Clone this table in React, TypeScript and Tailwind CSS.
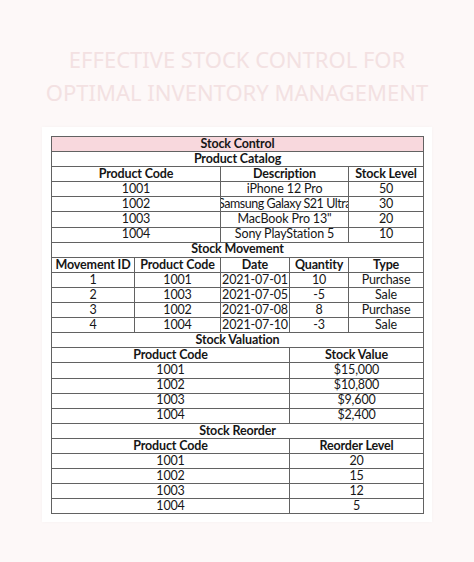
const catalog = [
  ["1001", "iPhone 12 Pro", "50"],
  ["1002", "Samsung Galaxy S21 Ultra", "30"],
  ["1003", 'MacBook Pro 13"', "20"],
  ["1004", "Sony PlayStation 5", "10"],
];

const movements = [
  ["1", "1001", "2021-07-01", "10", "Purchase"],
  ["2", "1003", "2021-07-05", "-5", "Sale"],
  ["3", "1002", "2021-07-08", "8", "Purchase"],
  ["4", "1004", "2021-07-10", "-3", "Sale"],
];

const valuation = [
  ["1001", "$15,000"],
  ["1002", "$10,800"],
  ["1003", "$9,600"],
  ["1004", "$2,400"],
];

const reorder = [
  ["1001", "20"],
  ["1002", "15"],
  ["1003", "12"],
  ["1004", "5"],
];

const cell = "h-[15.1px] border border-[#626262] p-0 text-center leading-none whitespace-nowrap overflow-hidden";

function Td({ children, span = 1, bold = false }: { children: React.ReactNode; span?: number; bold?: boolean }) {
  return (
    <td colSpan={span} className={`${cell} ${bold ? "font-bold" : ""}`}>
      <div className="flex h-[14px] items-center justify-center overflow-hidden">{children}</div>
    </td>
  );
}

function Section({ title }: { title: string }) {
  return (
    <tr>
      <Td span={5} bold>
        {title}
      </Td>
    </tr>
  );
}

export default function App() {
  return (
    <div className="h-[562px] w-[474px] bg-[#fdf8f8] pt-[43px]">
      <h1 className="text-center font-['Noto_Sans',sans-serif] text-[22px] font-normal leading-[33px] text-[#f3e1e2]">
        EFFECTIVE STOCK CONTROL FOR
        <br />
        OPTIMAL INVENTORY MANAGEMENT
      </h1>
      <div className="mx-auto mt-[18px] w-[390px] bg-white px-[9px] pb-[8px] pt-[9px] shadow-[0_0_4px_rgba(0,0,0,0.03)]">
        <table className="w-[372px] table-fixed border-collapse font-['Lato',sans-serif] text-[12.5px] tracking-[-0.15px] text-[#161616]">
          <colgroup>
            <col className="w-[83px]" />
            <col className="w-[86px]" />
            <col className="w-[69px]" />
            <col className="w-[59px]" />
            <col className="w-[75px]" />
          </colgroup>
          <tbody>
            <tr className="bg-[#f8d8dd]">
              <Td span={5} bold>
                Stock Control
              </Td>
            </tr>
            <Section title="Product Catalog" />
            <tr>
              <Td span={2} bold>Product Code</Td>
              <Td span={2} bold>Description</Td>
              <Td bold>Stock Level</Td>
            </tr>
            {catalog.map((r) => (
              <tr key={r[0]}>
                <Td span={2}>{r[0]}</Td>
                <Td span={2}>
                  <span className={r[0] === "1002" ? "tracking-[-0.45px]" : ""}>{r[1]}</span>
                </Td>
                <Td>{r[2]}</Td>
              </tr>
            ))}
            <Section title="Stock Movement" />
            <tr>
              <Td bold>Movement ID</Td>
              <Td bold>Product Code</Td>
              <Td bold>Date</Td>
              <Td bold>Quantity</Td>
              <Td bold>Type</Td>
            </tr>
            {movements.map((r) => (
              <tr key={r[0]}>
                {r.map((v, i) => (
                  <Td key={i}>{v}</Td>
                ))}
              </tr>
            ))}
            <Section title="Stock Valuation" />
            <tr>
              <Td span={3} bold>Product Code</Td>
              <Td span={2} bold>Stock Value</Td>
            </tr>
            {valuation.map((r) => (
              <tr key={r[0]}>
                <Td span={3}>{r[0]}</Td>
                <Td span={2}>{r[1]}</Td>
              </tr>
            ))}
            <Section title="Stock Reorder" />
            <tr>
              <Td span={3} bold>Product Code</Td>
              <Td span={2} bold>Reorder Level</Td>
            </tr>
            {reorder.map((r) => (
              <tr key={r[0]}>
                <Td span={3}>{r[0]}</Td>
                <Td span={2}>{r[1]}</Td>
              </tr>
            ))}
          </tbody>
        </table>
      </div>
    </div>
  );
}
